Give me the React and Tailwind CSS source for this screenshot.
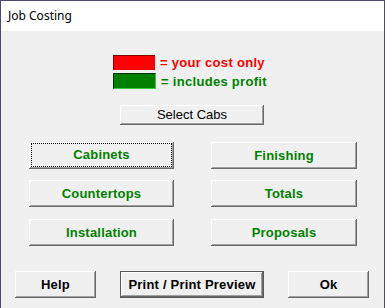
import React from "react";

const raised =
  "bg-[#f0f0f0] flex items-center justify-center shadow-[inset_-1px_-1px_#696969,inset_1px_1px_#ffffff,inset_-2px_-2px_#a0a0a0]";

const GreenButton = ({ label, className = "", focused }) => (
  <button
    type="button"
    className={`${raised} h-[27px] text-[13px] font-bold tracking-[0.2px] text-[#008000] ${className}`}
  >
    {focused ? (
      <span className="mb-[1px] flex h-[24px] w-[141px] items-center justify-center border border-dotted border-[#ff00ff] outline-1 outline-dotted outline-black -outline-offset-1">
        {label}
      </span>
    ) : (
      label
    )}
  </button>
);

const App = () => {
  return (
    <div
      className="h-[308px] w-[385px] border-l border-r border-t border-[#4b4874] bg-[#f0f0f0]"
      style={{ fontFamily: "'Liberation Sans', Arial, sans-serif" }}
    >
      <div
        className="flex h-[30px] items-center bg-white pl-[7px] text-[12px] text-black"
        style={{ fontFamily: "'Noto Sans', 'Open Sans', sans-serif" }}
      >
        Job Costing
      </div>

      <div className="pt-[24px]">
        {/* legend */}
        <div className="ml-[112px] flex flex-col gap-[3px] text-[13px] font-bold tracking-[0.3px]">
          <div className="flex items-center gap-[5px]">
            <div className="h-[15px] w-[42px] border-l border-t border-[#800000] bg-[#ff0000]" />
            <span className="leading-none text-[#ff0000]">= your cost only</span>
          </div>
          <div className="flex items-center gap-[5px]">
            <div className="h-[16px] w-[43px] border-b border-l border-r border-t border-b-[#3cc83c] border-l-[#003000] border-r-[#3cc83c] border-t-[#003000] bg-[#008000]" />
            <span className="leading-none text-[#008000]">= includes profit</span>
          </div>
        </div>

        <button
          type="button"
          className={`${raised} ml-[119px] mt-[16px] h-[20px] w-[144px] text-[13px] text-black`}
        >
          Select Cabs
        </button>

        {/* main sections */}
        <div className="mt-[17px] flex flex-col">
          <div className="flex">
            <GreenButton label="Cabinets" focused className="ml-[28px] w-[145px]" />
            <GreenButton label="Finishing" className="ml-[37px] w-[146px]" />
          </div>
          <div className="mt-[11px] flex">
            <GreenButton label="Countertops" className="ml-[28px] w-[145px]" />
            <GreenButton label="Totals" className="ml-[37px] w-[146px]" />
          </div>
          <div className="mt-[12px] flex">
            <GreenButton label="Installation" className="ml-[28px] w-[145px]" />
            <GreenButton label="Proposals" className="ml-[37px] w-[146px]" />
          </div>
        </div>

        {/* footer */}
        <div className="mt-[25px] flex text-[13px] font-bold tracking-[0.2px] text-black">
          <button type="button" className={`${raised} ml-[14px] h-[27px] w-[81px]`}>
            Help
          </button>
          <button
            type="button"
            className="ml-[24px] h-[27px] w-[144px] border border-[#5a5a5a] bg-[#f0f0f0]"
          >
            <span className={`${raised} h-full w-full`}>Print / Print Preview</span>
          </button>
          <button type="button" className={`${raised} ml-[24px] h-[27px] w-[81px]`}>
            Ok
          </button>
        </div>
      </div>
    </div>
  );
};

export default App;
